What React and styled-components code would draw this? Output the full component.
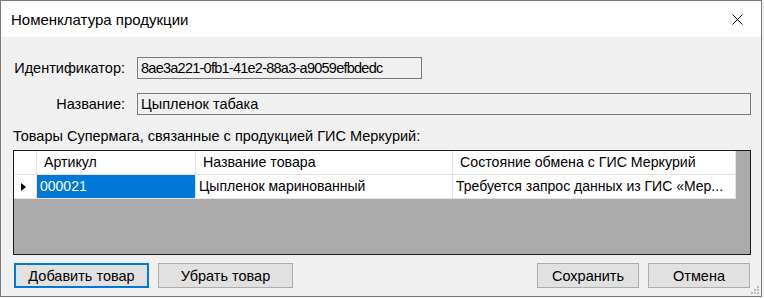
import React from "react";
import styled, { createGlobalStyle } from "styled-components";

const GlobalStyle = createGlobalStyle`
  body {
    margin: 0;
    background: #f0f0f0;
    font-family: "Liberation Sans", Arial, sans-serif;
  }
`;

const columns = [
  { title: "Артикул", width: 159 },
  { title: "Название товара", width: 257 },
  { title: "Состояние обмена с ГИС Меркурий", width: 283 },
];

const rows = [
  ["000021", "Цыпленок маринованный", "Требуется запрос данных из ГИС «Мер..."],
];

const CloseIcon = () => (
  <svg width="11" height="11" viewBox="0 0 11 11">
    <path d="M0.5 0.5 L10.5 10.5 M10.5 0.5 L0.5 10.5" stroke="#000" strokeWidth="1" fill="none" />
  </svg>
);

const App = () => {
  return (
    <>
      <GlobalStyle />
      <Window>
        <TitleBar>
          <Title>Номенклатура продукции</Title>
          <CloseButton>
            <CloseIcon />
          </CloseButton>
        </TitleBar>

        <Body>
          <FieldRow>
            <Label>Идентификатор:</Label>
            <Field width="285px" $tight>8ae3a221-0fb1-41e2-88a3-a9059efbdedc</Field>
          </FieldRow>
          <FieldRow>
            <Label>Название:</Label>
            <Field>Цыпленок табака</Field>
          </FieldRow>

          <GroupLabel>Товары Супермага, связанные с продукцией ГИС Меркурий:</GroupLabel>

          <GridView>
            <GridRow>
              <RowHeader />
              {columns.map((c) => (
                <HeaderCell key={c.title} style={{ width: c.width }}>
                  {c.title}
                </HeaderCell>
              ))}
            </GridRow>
            {rows.map((r) => (
              <GridRow key={r[0]}>
                <RowHeader>
                  <Arrow />
                </RowHeader>
                {r.map((v, i) => (
                  <Cell key={i} $selected={i === 0} style={{ width: columns[i].width }}>
                    <CellText>{v}</CellText>
                  </Cell>
                ))}
              </GridRow>
            ))}
          </GridView>

          <ButtonBar>
            <ButtonGroup>
              <Button $default>Добавить товар</Button>
              <Button>Убрать товар</Button>
            </ButtonGroup>
            <ButtonGroup>
              <Button $narrow>Сохранить</Button>
              <Button $narrow>Отмена</Button>
            </ButtonGroup>
          </ButtonBar>
        </Body>
        <SizeGrip>
          <svg width="9" height="9" viewBox="0 0 9 9">
            <rect x="6" y="0" width="2" height="2" fill="#bcbcbc" />
            <rect x="3" y="3" width="2" height="2" fill="#bcbcbc" />
            <rect x="6" y="3" width="2" height="2" fill="#bcbcbc" />
            <rect x="0" y="6" width="2" height="2" fill="#bcbcbc" />
            <rect x="3" y="6" width="2" height="2" fill="#bcbcbc" />
            <rect x="6" y="6" width="2" height="2" fill="#bcbcbc" />
          </svg>
        </SizeGrip>
      </Window>
    </>
  );
};

const Window = styled.div`
  position: relative;
  width: 762px;
  height: 297px;
  box-sizing: border-box;
  border: 1px solid #7a7a7a;
  background: #f0f0f0;
  display: flex;
  flex-direction: column;
`;

const TitleBar = styled.div`
  height: 36px;
  background: #fff;
  display: flex;
  align-items: center;
  justify-content: space-between;
  flex-shrink: 0;
`;

const Title = styled.div`
  padding-left: 10px;
  font-size: 15px;
  color: #000;
  margin-top: 1px;
`;

const CloseButton = styled.div`
  width: 46px;
  height: 36px;
  display: flex;
  align-items: center;
  justify-content: center;
  margin-right: 1px;
  margin-top: 1px;
`;

const Body = styled.div`
  flex: 1;
  display: flex;
  flex-direction: column;
  padding: 20px 10px 0 12px;
  font-size: 14.5px;
  color: #000;
`;

const FieldRow = styled.div`
  display: flex;
  align-items: center;
  gap: 12px;
  margin-bottom: 14px;
`;

const Label = styled.div`
  width: 112px;
  text-align: right;
  white-space: nowrap;
`;

const Field = styled.div`
  box-sizing: border-box;
  width: ${(p) => p.width || "614px"};
  height: 22px;
  border: 1px solid #7a7a7a;
  background: #f0f0f0;
  padding: 0 3px;
  line-height: 20px;
  white-space: nowrap;
  overflow: hidden;
  letter-spacing: ${(p) => (p.$tight ? "-0.75px" : "normal")};
`;

const GroupLabel = styled.div`
  margin-top: -1px;
  line-height: 16px;
  margin-bottom: 6px;
  white-space: nowrap;
`;

const GridView = styled.div`
  box-sizing: border-box;
  width: 738px;
  height: 105px;
  border: 1px solid #1b1b1b;
  background: #ababab;
`;

const GridRow = styled.div`
  display: flex;
  height: 24px;
`;

const RowHeader = styled.div`
  box-sizing: border-box;
  width: 23px;
  background: #fff;
  border-right: 1px solid #e4e4e4;
  border-bottom: 1px solid #e4e4e4;
  display: flex;
  align-items: center;
  justify-content: center;
`;

const Arrow = styled.div`
  width: 0;
  height: 0;
  margin-left: -3px;
  border-top: 4px solid transparent;
  border-bottom: 4px solid transparent;
  border-left: 5px solid #000;
`;

const HeaderCell = styled.div`
  box-sizing: border-box;
  background: #fff;
  border-right: 1px solid #e4e4e4;
  border-bottom: 1px solid #e4e4e4;
  padding-left: 7px;
  line-height: 23px;
  font-size: 14.2px;
  white-space: nowrap;
  overflow: hidden;
`;

const Cell = styled.div`
  box-sizing: border-box;
  background: ${(p) => (p.$selected ? "#0078d7" : "#fff")};
  color: ${(p) => (p.$selected ? "#fff" : "#000")};
  border-right: 1px solid #e4e4e4;
  border-bottom: 1px solid #e4e4e4;
  padding: 0 3px;
  line-height: 23px;
  font-size: 14px;
  display: flex;
  overflow: hidden;
`;

const CellText = styled.span`
  white-space: nowrap;
  overflow: hidden;
  text-overflow: ellipsis;
`;

const ButtonBar = styled.div`
  display: flex;
  justify-content: space-between;
  margin-top: 8px;
  padding-left: 1px;
  padding-right: 1px;
`;

const ButtonGroup = styled.div`
  display: flex;
  gap: 9px;
`;

const Button = styled.div`
  box-sizing: border-box;
  width: ${(p) => (p.$narrow ? "102px" : "135px")};
  height: 25px;
  background: #e1e1e1;
  border: ${(p) => (p.$default ? "2px solid #0078d7" : "1px solid #adadad")};
  display: flex;
  align-items: center;
  justify-content: center;
  font-size: 14.5px;
  white-space: nowrap;
`;

const SizeGrip = styled.div`
  position: absolute;
  right: 1px;
  bottom: 1px;
  line-height: 0;
`;

export default App;
